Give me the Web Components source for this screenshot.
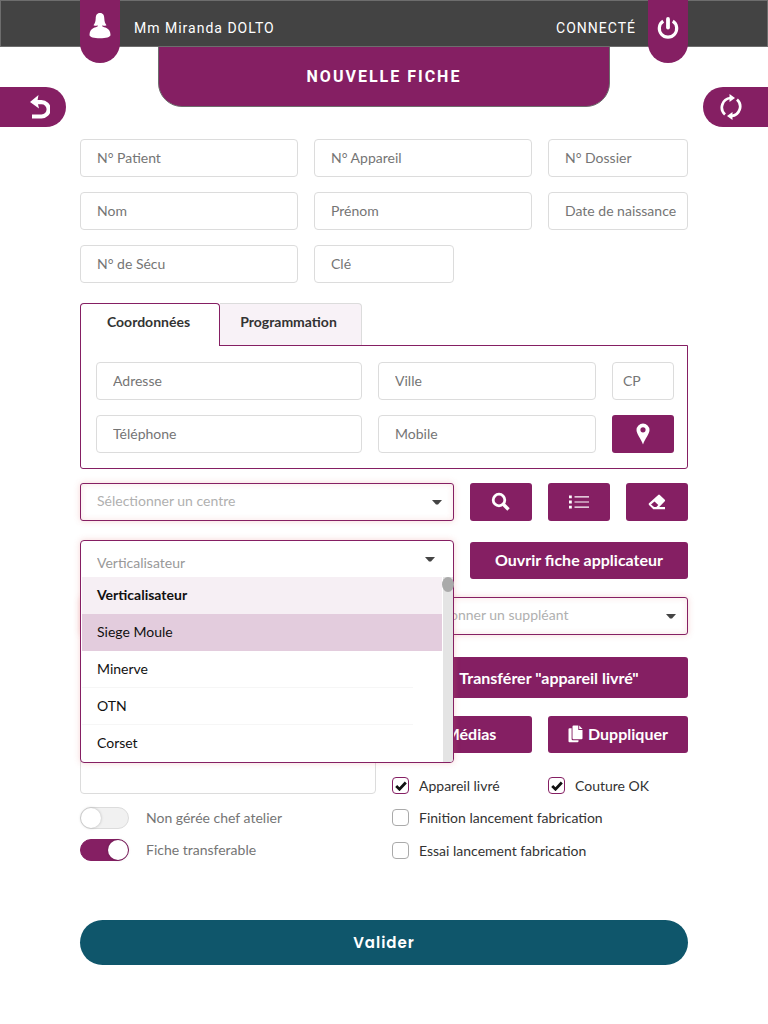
<!DOCTYPE html>
<html lang="fr">
<head>
<meta charset="utf-8">
<meta name="viewport" content="width=device-width, initial-scale=1">
<title>Nouvelle fiche</title>
<style>
  :root { --plum: #851f63; --teal: #0f566b; --line: #dcdcdc; --muted: #757575; --ink: #333; }
  body { margin: 0; background: #fff; font: 14px/20px Lato, "Liberation Sans", sans-serif; color: var(--ink); }
</style>
</head>
<body>
<fiche-page></fiche-page>

<script>
const define = (name, html, setup) => {
  const template = document.createElement('template');
  template.innerHTML = '<style>*{box-sizing:border-box}:host{box-sizing:border-box}button,input,select,textarea{font:inherit;margin:0}</style>' + html;
  customElements.define(name, class extends HTMLElement {
    constructor() {
      super();
      this.attachShadow({ mode: 'open' }).append(template.content.cloneNode(true));
    }
    connectedCallback() { if (setup) setup(this, this.shadowRoot); }
  });
};

const ICONS = {
  user: [22, 26, '<path d="M11 0C7.800 0 6.800 2.300 6.700 5.500C6.600 8.500 6 10.500 4.500 12.200C5.800 12.800 7.500 12.900 8.800 12.600V13.300C7.800 14.200 6 14.300 4.500 15.100C1.800 16.500.5 19 .5 22C.5 24 5 25.300 11 25.300S21.500 24 21.500 22C21.500 19 20.200 16.500 17.500 15.100C16 14.300 14.200 14.200 13.200 13.300V12.600C14.500 12.900 16.200 12.800 17.500 12.200C16 10.500 15.400 8.500 15.300 5.500C15.200 2.300 14.200 0 11 0Z"/>'],
  power: [22, 22, '<path d="M6.200 4.200A8.700 8.700 0 1 0 15.800 4.200" fill="none" stroke="currentColor" stroke-width="3.200"/><path d="M11 2V10.500" stroke="currentColor" stroke-width="3.800" stroke-linecap="round"/>'],
  undo: [20, 24, '<path d="M8.500 0L0 7L9 13.500L8 9.200H11.500A5 5 0 0 1 11.500 19.400H2V23.500H11.500A9.200 9.200 0 0 0 11.500 5H7.600Z"/>'],
  sync: [24, 26, '<g fill="none" stroke="currentColor" stroke-width="2.700"><path d="M6 20.500A9.500 9.500 0 0 1 11.500 4"/><path d="M18 5.500A9.500 9.500 0 0 1 12.500 22"/></g><path d="M10.500 0L16 4L10.500 8Z"/><path d="M13.500 18L8 22L13.500 26Z"/>'],
  pin: [14, 22, '<path fill-rule="evenodd" d="M7 .5A6.500 6.500 0 0 0 .5 7C.5 11 4.800 15.500 7 21.500C9.200 15.500 13.500 11 13.500 7A6.500 6.500 0 0 0 7 .5ZM7 4.200A2.600 2.600 0 1 1 7 9.400A2.600 2.600 0 0 1 7 4.200Z"/>'],
  search: [20, 20, '<circle cx="8" cy="8" r="5.800" fill="none" stroke="currentColor" stroke-width="2.800"/><path d="M12.300 12.300L17.500 17.500" stroke="currentColor" stroke-width="3.400"/>'],
  list: [22, 16, '<path d="M1 1.500H3.800V4.300H1ZM1 6.600H3.800V9.400H1ZM1 11.700H3.800V14.500H1Z"/><path d="M6.500 2.900H21M6.500 8H21M6.500 13.100H21" stroke="currentColor" stroke-width="1.200"/>'],
  eraser: [18, 16, '<path fill-rule="evenodd" d="M10.200.9Q11 .2 11.800 .9L16.800 5.700Q17.500 6.500 16.800 7.300L11.200 13.100H17V15.200H5.300L1 11Q.2 10 1 9.200ZM6.500 7.600L3 10.400L6.100 13.100H8.300L10.300 11.100Z"/>'],
  copy: [16, 18, '<path d="M5.500 .5H10.300V4.900H14.500V13.200Q14.500 14.200 13.500 14.200H5.500Q4.500 14.200 4.500 13.200V1.500Q4.500 .5 5.500 .5Z"/><path d="M11.200.5L14.500 4H11.200Z"/><path d="M3.600 3.200H1.500Q.5 3.200 .5 4.200V16.200Q.5 17.200 1.500 17.200H9.500Q10.500 17.200 10.500 16.200V15.200H4.800Q3.600 15.200 3.600 14Z"/>'],
  send: [14, 16, '<path d="M6 3L12 8L6 13V10H0V6H6Z"/>'],
  media: [13, 14, '<path fill-rule="evenodd" d="M0 2H13V12H0ZM2 10H11L8 5L5 8L4 7Z"/>'],
  caret: [10, 5, '<path d="M0 0H10L6 4.500H4Z"/>'],
  check: [12, 10, '<path d="M1.200 5L4.500 8.200L10.800 1.500" fill="none" stroke="currentColor" stroke-width="2.800"/>']
};
define('x-icon', '<style>:host{display:block;flex:none}svg{display:block}</style><svg fill="currentColor" aria-hidden="true"></svg>', (el, root) => {
  const [w, h, body] = ICONS[el.getAttribute('name')];
  const svg = root.querySelector('svg');
  svg.setAttribute('viewBox', `0 0 ${w} ${h}`);
  svg.setAttribute('width', w);
  svg.setAttribute('height', h);
  svg.innerHTML = body;
});

define('x-field', `<style>
  :host{display:block;height:38px}
  input{display:block;width:100%;height:100%;padding:0 8px 2px 16px;border:1px solid var(--line);border-radius:4px;background:#fff;color:var(--ink);outline:0}
  :host([compact]) input{padding-left:10px}
  input::placeholder{color:var(--muted);opacity:1}
</style><input type="text">`, (el, root) => {
  const input = root.querySelector('input');
  input.placeholder = el.getAttribute('label');
  input.setAttribute('aria-label', el.getAttribute('label'));
});

define('x-select', `<style>
  :host{display:grid;height:38px;align-items:center}
  select,x-icon{grid-area:1/1}
  select{width:100%;height:38px;padding:0 32px 2px 16px;appearance:none;border:1px solid var(--plum);border-radius:3px;background:#fff;color:#b0b0b0;box-shadow:0 0 6px rgba(225,120,120,.3),inset 0 0 6px rgba(225,120,120,.2);outline:0}
  x-icon{justify-self:end;margin-right:12px;color:#444;pointer-events:none}
</style><select><option></option></select><x-icon name="caret"></x-icon>`, (el, root) => {
  root.querySelector('select').setAttribute('aria-label', el.getAttribute('label') || 'Titulaire');
  root.querySelector('option').textContent = el.getAttribute('label');
});

define('x-open-select', `<style>
  :host{display:block;position:relative;height:38px;z-index:2}
  .box{position:absolute;inset:0 0 auto 0;border:1px solid var(--plum);border-radius:4px;background:#fff;box-shadow:0 0 6px rgba(225,120,120,.3)}
  .face{display:grid;align-items:center;height:36px}
  select,x-icon{grid-area:1/1}
  select{width:100%;height:36px;padding:8px 40px 0 16px;appearance:none;border:0;border-radius:3px;background:none;color:#999;outline:0}
  x-icon{justify-self:end;margin-right:18px;color:#444;pointer-events:none}
  .list{display:flex}
  ul{flex:1;list-style:none;margin:0 1px;padding:0;color:#111}
  li{height:37px;padding:0 15px;line-height:35px;background:linear-gradient(#f6f6f6,#f6f6f6) 0 100%/92% 1px no-repeat}
  li:last-child{background:none}
  li.current{background:#f6eff4;font-weight:700}
  li.hover{background:#e3ccdd}
  .track{width:10px;background:#e4e4e4;border-radius:0 0 3px 0}
  .thumb{width:12px;height:15px;margin-left:-1px;border-radius:50%;background:#aaa}
</style>
<div class="box">
  <div class="face"><select aria-label="Type d’appareil"><option>Verticalisateur</option></select><x-icon name="caret"></x-icon></div>
  <div class="list">
    <ul role="listbox" aria-label="Type d’appareil">
      <li class="current" role="option" aria-selected="true">Verticalisateur</li>
      <li class="hover" role="option">Siege Moule</li>
      <li role="option">Minerve</li>
      <li role="option">OTN</li>
      <li role="option">Corset</li>
    </ul>
    <div class="track"><div class="thumb"></div></div>
  </div>
</div>`);

define('x-button', `<style>
  :host{display:block;height:37px}
  button{display:flex;align-items:center;justify-content:center;gap:4px;width:100%;height:100%;padding:0 0 2px;border:0;border-radius:3px;background:var(--plum);color:#fff;font-size:16px;font-weight:700;cursor:pointer}
  :host([tall]){height:41px}
  :host([square]){height:38px}
  :host([square]) button,:host([tall]) button{padding:0}
</style><button type="button"><slot></slot></button>`, (el, root) => {
  if (el.hasAttribute('label')) root.querySelector('button').setAttribute('aria-label', el.getAttribute('label'));
});

define('x-check', `<style>
  :host{display:block}
  label{display:flex;align-items:center;gap:10px;height:17px;white-space:nowrap}
  .box{display:grid;place-items:center}
  input,x-icon{grid-area:1/1}
  input{appearance:none;width:17px;height:17px;border:1px solid #aaa;border-radius:4px;background:#fff}
  input:checked{border-color:var(--plum)}
  x-icon{display:none;color:#111;pointer-events:none}
  input:checked + x-icon{display:block}
</style><label><span class="box"><input type="checkbox"><x-icon name="check"></x-icon></span><slot></slot></label>`, (el, root) => {
  root.querySelector('input').checked = el.hasAttribute('checked');
});

define('x-switch', `<style>
  :host{display:block;color:var(--muted)}
  label{display:flex;align-items:center;gap:17px;height:22px}
  input{appearance:none;display:flex;flex:none;width:49px;height:22px;border:1px solid var(--line);border-radius:11px;background:#f1f1f1}
  input::before{content:"";width:20px;height:20px;border-radius:50%;background:#fff;box-shadow:0 0 3px rgba(0,0,0,.25)}
  input:checked{justify-content:flex-end;border-color:var(--plum);background:var(--plum)}
</style><label><input type="checkbox" role="switch"><slot></slot></label>`, (el, root) => {
  root.querySelector('input').checked = el.hasAttribute('checked');
});

define('x-header', `<style>
  :host{display:block;font-family:Roboto,"Liberation Sans",sans-serif}
  .bar{display:flex;height:47px;padding:0 79px;border:1px solid #6d6d6d;background:#434343;color:#fff;font-size:14px;letter-spacing:1px}
  .bar p{margin:0;line-height:54px}
  .name{flex:1;padding-left:14px}
  .state{padding-right:12px}
  .bar button{display:flex;justify-content:center;width:40px;height:63px;margin-top:-1px;padding:13px 0 0;border:0;border-radius:0 0 20px 20px;background:var(--plum);color:#fff;position:relative}
  .bar .power{padding-top:17px}
  .row{display:flex;justify-content:space-between;height:81px;margin-top:-1px}
  h1{flex:1;height:61px;margin:0 93px 0 92px;border:1px solid #6d6d6d;border-radius:0 0 24px 24px;background:var(--plum);color:#fff;font-size:16px;font-weight:700;line-height:59px;text-align:center;letter-spacing:2px}
  .side{display:flex;align-items:center;align-self:flex-end;width:66px;height:40px;padding:0 16px;border:0;background:var(--plum);color:#fff}
  .back{justify-content:flex-end;border-radius:0 20px 20px 0}
  .reload{width:65px;border-radius:20px 0 0 20px}
</style>
<header>
  <div class="bar">
    <button type="button" aria-label="Profil"><x-icon name="user"></x-icon></button>
    <p class="name">Mm Miranda DOLTO</p>
    <p class="state">CONNECTÉ</p>
    <button class="power" type="button" aria-label="Déconnexion"><x-icon name="power"></x-icon></button>
  </div>
  <div class="row">
    <button class="side back" type="button" aria-label="Retour"><x-icon name="undo"></x-icon></button>
    <h1>NOUVELLE FICHE</h1>
    <button class="side reload" type="button" aria-label="Actualiser"><x-icon name="sync"></x-icon></button>
  </div>
</header>`);

define('x-contact', `<style>
  :host{display:block}
  .tabs{display:flex}
  .tabs button{width:142px;height:42px;padding:0 4px 6px 0;border:1px solid var(--line);border-bottom:0;border-left:0;border-radius:0 4px 0 0;background:#f8f2f7;color:var(--ink);font-weight:700}
  .tabs .on{width:140px;height:43px;padding:0 3px 7px 0;margin-bottom:-1px;border:1px solid var(--plum);border-bottom:0;border-radius:4px 4px 0 0;background:#fff;position:relative}
  .panel{display:grid;grid-template-columns:266fr 218fr 62fr;gap:15px 16px;padding:16px 13px 15px 15px;border:1px solid var(--plum);border-radius:0 0 3px 3px}
</style>
<div class="tabs" role="tablist">
  <button class="on" type="button" role="tab" aria-selected="true">Coordonnées</button>
  <button type="button" role="tab" aria-selected="false">Programmation</button>
</div>
<div class="panel" role="tabpanel">
  <x-field label="Adresse"></x-field><x-field label="Ville"></x-field><x-field label="CP" compact></x-field>
  <x-field label="Téléphone"></x-field><x-field label="Mobile"></x-field>
  <x-button square label="Localiser"><x-icon name="pin"></x-icon></x-button>
</div>`);

define('fiche-page', `<style>
  :host{display:block}
  main{padding:12px 80px 32px}
  .grid{display:grid;grid-template-columns:repeat(8,1fr);gap:15px 16px}
  .s2{grid-column:span 2}.s3{grid-column:span 3}.s5{grid-column:span 5}
  x-contact{margin:20px 0 14px}
  .device{margin-top:19px}
  .device x-button{margin-top:2px}
  .halves{display:grid;grid-template-columns:1fr 1fr;gap:16px;margin-top:18px}
  .left,.right{display:flex;flex-direction:column}
  textarea{display:block;width:100%;height:137px;margin:22px 0 13px;padding:8px 16px;border:1px solid var(--line);border-radius:4px;resize:none}
  x-switch + x-switch{margin-top:10px}
  .transfer{margin:22px 0 18px}
  .pair{display:grid;grid-template-columns:1fr 1fr;gap:16px}
  .checks{margin:24px 0 15px}
  .right > x-check + x-check{margin-top:16px}
  .submit{display:block;width:100%;height:45px;margin-top:59px;padding:0;border:0;border-radius:23px;background:var(--teal);color:#fff;font:600 15px/24px Poppins,Inter,sans-serif;letter-spacing:1px}
</style>
<x-header></x-header>
<main>
  <div class="grid">
    <x-field class="s3" label="N° Patient"></x-field><x-field class="s3" label="N° Appareil"></x-field><x-field class="s2" label="N° Dossier"></x-field>
    <x-field class="s3" label="Nom"></x-field><x-field class="s3" label="Prénom"></x-field><x-field class="s2" label="Date de naissance"></x-field>
    <x-field class="s3" label="N° de Sécu"></x-field><x-field class="s2" label="Clé"></x-field>
  </div>
  <x-contact></x-contact>
  <div class="grid">
    <x-select class="s5" label="Sélectionner un centre"></x-select>
    <x-button square label="Rechercher"><x-icon name="search"></x-icon></x-button>
    <x-button square label="Liste"><x-icon name="list"></x-icon></x-button>
    <x-button square label="Effacer"><x-icon name="eraser"></x-icon></x-button>
  </div>
  <div class="grid device">
    <x-open-select class="s5"></x-open-select>
    <x-button class="s3">Ouvrir fiche applicateur</x-button>
  </div>
  <div class="halves">
    <div class="left">
      <x-select label=""></x-select>
      <textarea aria-label="Commentaire"></textarea>
      <x-switch>Non gérée chef atelier</x-switch>
      <x-switch checked>Fiche transferable</x-switch>
    </div>
    <div class="right">
      <x-select label="Sélectionner un suppléant"></x-select>
      <x-button class="transfer" tall><x-icon name="send"></x-icon>Transférer "appareil livré"</x-button>
      <div class="pair">
        <x-button><x-icon name="media"></x-icon>Médias</x-button>
        <x-button><x-icon name="copy"></x-icon>Duppliquer</x-button>
      </div>
      <div class="pair checks">
        <x-check checked>Appareil livré</x-check>
        <x-check checked>Couture OK</x-check>
      </div>
      <x-check>Finition lancement fabrication</x-check>
      <x-check>Essai lancement fabrication</x-check>
    </div>
  </div>
  <button class="submit" type="button">Valider</button>
</main>`);
</script>
</body>
</html>
